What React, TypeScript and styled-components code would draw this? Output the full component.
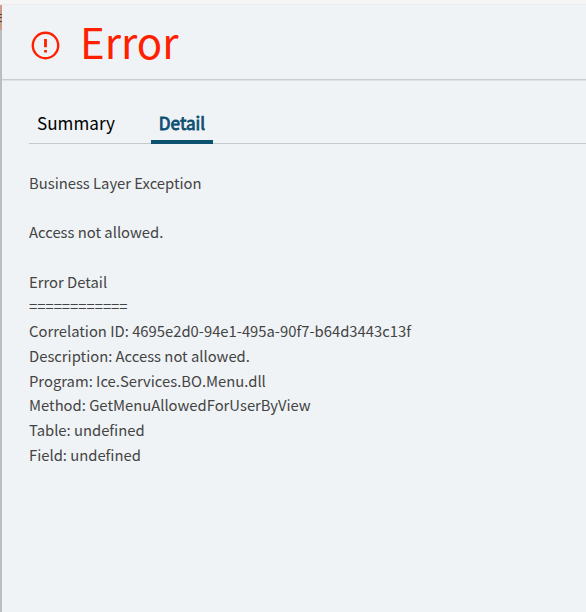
import React from "react";
import styled, { createGlobalStyle } from "styled-components";

const GlobalStyle = createGlobalStyle`
  * { box-sizing: border-box; }
  body {
    margin: 0;
    background: #eff3f6;
    font-family: "Noto Sans CJK SC", "Noto Sans", sans-serif;
    overflow: hidden;
  }
`;

const Screen = styled.div`
  display: flex;
  flex-direction: column;
  width: 100%;
  height: 100vh;
  min-height: 612px;
`;

const TopStrip = styled.div`
  height: 5px;
  flex: none;
  background: #f5f5f5;
  border-bottom: 1px solid #ebebeb;
`;

const Body = styled.div`
  display: flex;
  flex: 1;
`;

const Backdrop = styled.div`
  display: flex;
  flex-direction: column;
  width: 2px;
  flex: none;
  background: #bcbdbf;
`;

const BackdropTile = styled.div`
  height: 25px;
  background: linear-gradient(
    #cf9c8b 0 9px,
    #4b403d 9px 10px,
    #cfa192 10px 12px,
    #5c4c47 12px 13px,
    #cfa192 13px 16px,
    #4b403d 16px 17px,
    #cf9c8b 17px
  );
`;

const Panel = styled.section`
  flex: 1;
  min-width: 0;
  background: #eff3f6;
`;

const Header = styled.header`
  display: flex;
  align-items: flex-start;
  height: 75px;
  padding-left: 29px;
  border-bottom: 1px solid #c9cdd0;
  box-shadow: 0 1px 0 #dfe3e6;
`;

const AlertIcon = styled.svg`
  display: block;
  width: 30px;
  height: 30px;
  margin-top: 26px;
`;

const Title = styled.h1`
  margin: 6px 0 0 19px;
  font-size: 42px;
  font-weight: 400;
  line-height: 60px;
  color: #ff2000;
`;

const Tabs = styled.nav`
  display: flex;
  height: 39px;
  margin: 25px 0 0 27px;
  border-bottom: 1px solid #c5cacd;
`;

const Tab = styled.button<{ $active?: boolean }>`
  flex: none;
  width: ${(p) => (p.$active ? 62 : 94)}px;
  height: 39px;
  margin-left: ${(p) => (p.$active ? 28 : 0)}px;
  padding: 1px 0 0;
  border: 0;
  border-bottom: 4px solid ${(p) => (p.$active ? "#0b4f71" : "transparent")};
  background: none;
  font-family: inherit;
  font-size: 17.1px;
  font-weight: 400;
  -webkit-text-stroke: ${(p) => (p.$active ? "0.8px #0b4f71" : "0")};
  line-height: 34px;
  color: ${(p) => (p.$active ? "#0b4f71" : "#000")};
`;

const Details = styled.pre`
  margin: 26.8px 0 0 27px;
  font-family: inherit;
  font-size: 14.8px;
  line-height: 24.72px;
  color: #444;
`;

const message = `Business Layer Exception

Access not allowed.

Error Detail
============
Correlation ID: 4695e2d0-94e1-495a-90f7-b64d3443c13f
Description: Access not allowed.
Program: Ice.Services.BO.Menu.dll
Method: GetMenuAllowedForUserByView
Table: undefined
Field: undefined`;

export default function App() {
  return (
    <>
      <GlobalStyle />
      <Screen>
        <TopStrip />
        <Body>
          <Backdrop>
            <BackdropTile />
          </Backdrop>
          <Panel>
            <Header>
              <AlertIcon viewBox="0 0 30 30" aria-hidden="true">
                <circle cx="14.5" cy="14.5" r="12.7" fill="none" stroke="#ff2000" strokeWidth="2.4" />
                <path d="M13.1 8h2.8v8.3h-2.8zM13.1 19h2.8v2.5h-2.8z" fill="#ff2000" />
              </AlertIcon>
              <Title>Error</Title>
            </Header>
            <Tabs>
              <Tab>Summary</Tab>
              <Tab $active>Detail</Tab>
            </Tabs>
            <Details>{message}</Details>
          </Panel>
        </Body>
      </Screen>
    </>
  );
}
